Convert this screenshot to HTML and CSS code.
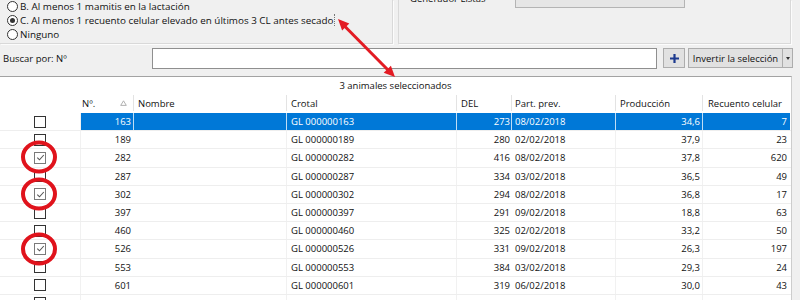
FILE: index.html
```html
<!DOCTYPE html>
<html lang="es">
<head>
<meta charset="utf-8">
<title>Selección de animales</title>
<link rel="stylesheet" href="styles.css">
</head>
<body>
<div class="top">
  <div class="group group-left">
    <div class="radios">
      <div class="radio"><span class="radio-dot"></span><span>B. Al menos 1 mamitis en la lactación</span></div>
      <div class="radio"><span class="radio-dot on"></span><span class="focus">C. Al menos 1 recuento celular elevado en últimos 3 CL antes secado</span></div>
      <div class="radio"><span class="radio-dot"></span><span>Ninguno</span></div>
    </div>
  </div>
  <div class="group group-right">
    <div class="gen">
      <span class="gen-label">Generador Listas</span>
      <div class="combo"><span class="combo-arrow"></span></div>
    </div>
  </div>
</div>

<div class="search">
  <span class="search-label">Buscar por: Nº</span>
  <div class="search-input"></div>
  <div class="btn plus"><svg width="11" height="11" viewBox="0 0 11 11"><path d="M5.5 1v9M1 5.5h9" stroke="#1d3a8f" stroke-width="2.2"/></svg></div>
  <div class="split">
    <div class="btn split-main">Invertir la selección</div>
    <div class="btn split-drop"><span class="tri"></span></div>
  </div>
</div>

<div class="panel">
  <div class="count">3 animales seleccionados</div>
  <div class="row head">
    <div class="c c-chk"></div>
    <div class="c h-no"><span>Nº.</span><svg width="7" height="6" viewBox="0 0 7 6"><path d="M3.5 0.8L6.3 5.4H0.7Z" fill="none" stroke="#a8a8a8" stroke-width="0.9"/></svg></div>
    <div class="c c-name">Nombre</div>
    <div class="c c-crotal">Crotal</div>
    <div class="c c-del">DEL</div>
    <div class="c c-part">Part. prev.</div>
    <div class="c c-prod">Producción</div>
    <div class="c c-rc">Recuento celular</div>
  </div>

  <div class="row sel">
    <div class="c c-chk"><span class="cb"></span></div>
    <div class="c c-no">163</div><div class="c c-name"></div><div class="c c-crotal">GL 000000163</div>
    <div class="c c-del">273</div><div class="c c-part">08/02/2018</div><div class="c c-prod">34,6</div><div class="c c-rc">7</div>
  </div>
  <div class="row">
    <div class="c c-chk"><span class="cb"></span></div>
    <div class="c c-no">189</div><div class="c c-name"></div><div class="c c-crotal">GL 000000189</div>
    <div class="c c-del">280</div><div class="c c-part">02/02/2018</div><div class="c c-prod">37,9</div><div class="c c-rc">23</div>
  </div>
  <div class="row">
    <div class="c c-chk"><span class="cb on"><svg width="9" height="9" viewBox="0 0 9 9"><path d="M1.3 4.6L3.5 6.8L7.8 2" fill="none" stroke="#555" stroke-width="1.1"/></svg></span></div>
    <div class="c c-no">282</div><div class="c c-name"></div><div class="c c-crotal">GL 000000282</div>
    <div class="c c-del">416</div><div class="c c-part">08/02/2018</div><div class="c c-prod">37,8</div><div class="c c-rc">620</div>
  </div>
  <div class="row">
    <div class="c c-chk"><span class="cb"></span></div>
    <div class="c c-no">287</div><div class="c c-name"></div><div class="c c-crotal">GL 000000287</div>
    <div class="c c-del">334</div><div class="c c-part">03/02/2018</div><div class="c c-prod">36,5</div><div class="c c-rc">49</div>
  </div>
  <div class="row">
    <div class="c c-chk"><span class="cb on"><svg width="9" height="9" viewBox="0 0 9 9"><path d="M1.3 4.6L3.5 6.8L7.8 2" fill="none" stroke="#555" stroke-width="1.1"/></svg></span></div>
    <div class="c c-no">302</div><div class="c c-name"></div><div class="c c-crotal">GL 000000302</div>
    <div class="c c-del">294</div><div class="c c-part">08/02/2018</div><div class="c c-prod">36,8</div><div class="c c-rc">17</div>
  </div>
  <div class="row">
    <div class="c c-chk"><span class="cb"></span></div>
    <div class="c c-no">397</div><div class="c c-name"></div><div class="c c-crotal">GL 000000397</div>
    <div class="c c-del">291</div><div class="c c-part">09/02/2018</div><div class="c c-prod">18,8</div><div class="c c-rc">63</div>
  </div>
  <div class="row">
    <div class="c c-chk"><span class="cb"></span></div>
    <div class="c c-no">460</div><div class="c c-name"></div><div class="c c-crotal">GL 000000460</div>
    <div class="c c-del">325</div><div class="c c-part">02/02/2018</div><div class="c c-prod">33,2</div><div class="c c-rc">50</div>
  </div>
  <div class="row">
    <div class="c c-chk"><span class="cb on"><svg width="9" height="9" viewBox="0 0 9 9"><path d="M1.3 4.6L3.5 6.8L7.8 2" fill="none" stroke="#555" stroke-width="1.1"/></svg></span></div>
    <div class="c c-no">526</div><div class="c c-name"></div><div class="c c-crotal">GL 000000526</div>
    <div class="c c-del">331</div><div class="c c-part">09/02/2018</div><div class="c c-prod">26,3</div><div class="c c-rc">197</div>
  </div>
  <div class="row">
    <div class="c c-chk"><span class="cb"></span></div>
    <div class="c c-no">553</div><div class="c c-name"></div><div class="c c-crotal">GL 000000553</div>
    <div class="c c-del">384</div><div class="c c-part">03/02/2018</div><div class="c c-prod">29,3</div><div class="c c-rc">24</div>
  </div>
  <div class="row">
    <div class="c c-chk"><span class="cb"></span></div>
    <div class="c c-no">601</div><div class="c c-name"></div><div class="c c-crotal">GL 000000601</div>
    <div class="c c-del">319</div><div class="c c-part">06/02/2018</div><div class="c c-prod">30,0</div><div class="c c-rc">43</div>
  </div>
  <div class="row">
    <div class="c c-chk"><span class="cb"></span></div>
    <div class="c c-no"></div><div class="c c-name"></div><div class="c c-crotal"></div>
    <div class="c c-del"></div><div class="c c-part"></div><div class="c c-prod"></div><div class="c c-rc"></div>
  </div>
</div>

<svg class="annot" width="800" height="300" viewBox="0 0 800 300">
  <g fill="#e31b23" stroke="none">
    <polygon points="338,19 342.1,30.4 349.3,23.4"/>
    <polygon points="395,77 383.7,72.7 390.9,65.7"/>
  </g>
  <line x1="344" y1="25.5" x2="389" y2="71" stroke="#e31b23" stroke-width="3"/>
  <g fill="none" stroke="#e0131c" stroke-width="4">
    <ellipse cx="39" cy="157" rx="16" ry="14.5"/>
    <ellipse cx="39" cy="194" rx="16" ry="14.5"/>
    <ellipse cx="39" cy="249" rx="16" ry="14.5"/>
  </g>
</svg>
</body>
</html>
```

FILE: styles.css
```css
html, body {
  margin: 0;
  padding: 0;
}

body {
  background: #f0f0f0;
  font-family: "Open Sans", "Noto Sans", sans-serif;
  font-size: 9.5px;
  color: #111;
  width: 800px;
  height: 300px;
  overflow: hidden;
  position: relative;
}

/* top group boxes */
.top {
  display: flex;
  gap: 5px;
  height: 44px;
}

.group {
  box-sizing: border-box;
  height: 44px;
  border-bottom: 1px solid #d9d9d9;
  border-right: 1px solid #d9d9d9;
  box-shadow: 1px 1px 0 #fcfcfc;
}

.group-left {
  width: 393px;
}

.group-right {
  width: 393px;
  border-left: 1px solid #d9d9d9;
}

.radios {
  margin-top: -1px;
  padding-left: 7px;
  font-size: 9.85px;
}

.radio {
  display: flex;
  align-items: center;
  gap: 2px;
  height: 14px;
  white-space: nowrap;
}

.radio-dot {
  box-sizing: border-box;
  width: 11px;
  height: 11px;
  border: 1px solid #333;
  border-radius: 50%;
  background: #fff;
  display: flex;
  align-items: center;
  justify-content: center;
  flex: none;
}

.radio-dot.on::after {
  content: "";
  width: 5px;
  height: 5px;
  border-radius: 50%;
  background: #333;
}

.focus {
  border-right: 1px dotted #777;
  padding-right: 1px;
  line-height: 12px;
}

.gen {
  display: flex;
  align-items: center;
  margin-top: -12px;
  height: 20px;
  padding-left: 11px;
}

.gen-label {
  width: 105px;
  flex: none;
}

.combo {
  box-sizing: border-box;
  width: 170px;
  height: 20px;
  background: #e6e6e6;
  border: 1px solid #b4b4b4;
  display: flex;
  align-items: center;
  justify-content: flex-end;
  padding-right: 5px;
}

.combo-arrow {
  width: 0;
  height: 0;
  border-left: 2.5px solid transparent;
  border-right: 2.5px solid transparent;
  border-top: 3px solid #555;
}

/* search row */
.search {
  display: flex;
  align-items: flex-start;
  margin-top: 4px;
  height: 21px;
  padding-left: 3px;
}

.search-label {
  width: 149px;
  flex: none;
  line-height: 21px;
}

.search-input {
  box-sizing: border-box;
  width: 505px;
  height: 21px;
  background: #fff;
  border: 1px solid #8f8f8f;
  flex: none;
}

.btn {
  box-sizing: border-box;
  height: 20px;
  background: #e1e1e1;
  border: 1px solid #adadad;
  display: flex;
  align-items: center;
  justify-content: center;
  flex: none;
}

.plus {
  width: 22px;
  margin-left: 6px;
}

.split {
  display: flex;
  margin-left: 3px;
}

.split-main {
  width: 95px;
  white-space: nowrap;
}

.split-drop {
  width: 10px;
  border-left: none;
}

.tri {
  width: 0;
  height: 0;
  border-left: 2.5px solid transparent;
  border-right: 2.5px solid transparent;
  border-top: 3px solid #333;
}

/* grid panel */
.panel {
  box-sizing: border-box;
  margin-top: 7px;
  width: 792px;
  height: 240px;
  background: #fff;
  border-top: 1px solid #a3a3a3;
  border-right: 1px solid #cdcdcd;
}

.count {
  height: 18px;
  line-height: 18px;
  text-align: center;
}

.row {
  display: grid;
  grid-template-columns: 81px 53px 153px 170px 55px 104px 87px 87px;
  box-sizing: border-box;
  height: 18.2px;
  border-bottom: 1px solid #eeeeee;
}

.row.head {
  height: 18px;
  border-bottom: none;
}

.c {
  box-sizing: border-box;
  display: flex;
  align-items: center;
  white-space: nowrap;
  overflow: hidden;
  border-right: 1px solid transparent;
}

.head .c {
  border-right: 1px solid #e3e3e3;
  margin: 0 0 2px;
}

.head .c-chk,
.head .c-rc {
  border-right-color: transparent;
}

.head .h-no {
  justify-content: space-between;
  padding: 0 6px 0 1px;
}

.c-chk {
  padding-left: 34px;
  border-right-color: #f1f1f1;
}

.c-no {
  justify-content: flex-end;
  padding-right: 2px;
}

.c-name {
  padding-left: 4px;
  border-right-color: #f1f1f1;
}

.c-crotal {
  padding-left: 4px;
  border-right-color: #f1f1f1;
}

.c-del {
  justify-content: flex-end;
  padding-right: 1px;
}

.head .c-del {
  justify-content: flex-start;
  padding-left: 4px;
}

.c-part {
  padding-left: 3px;
  border-right-color: #f1f1f1;
}

.c-prod {
  justify-content: flex-end;
  padding-right: 2px;
  border-right-color: #f1f1f1;
}

.head .c-prod {
  justify-content: flex-start;
  padding-left: 4px;
}

.c-rc {
  justify-content: flex-end;
  padding-right: 2px;
}

.head .c-rc {
  justify-content: flex-start;
  padding-left: 5px;
}

.sel .c:not(.c-chk) {
  background: #0078d7;
  color: #fff;
  border-right-color: rgba(255, 255, 255, 0.75);
}

.sel .c-rc {
  border-right-color: transparent !important;
}

.cb {
  box-sizing: border-box;
  width: 12px;
  height: 12px;
  border: 1px solid #333;
  background: #fff;
  display: flex;
  align-items: center;
  justify-content: center;
}

.cb.on {
  border-color: #7a7a7a;
}

.annot {
  position: absolute;
  left: 0;
  top: 0;
  pointer-events: none;
}
```
